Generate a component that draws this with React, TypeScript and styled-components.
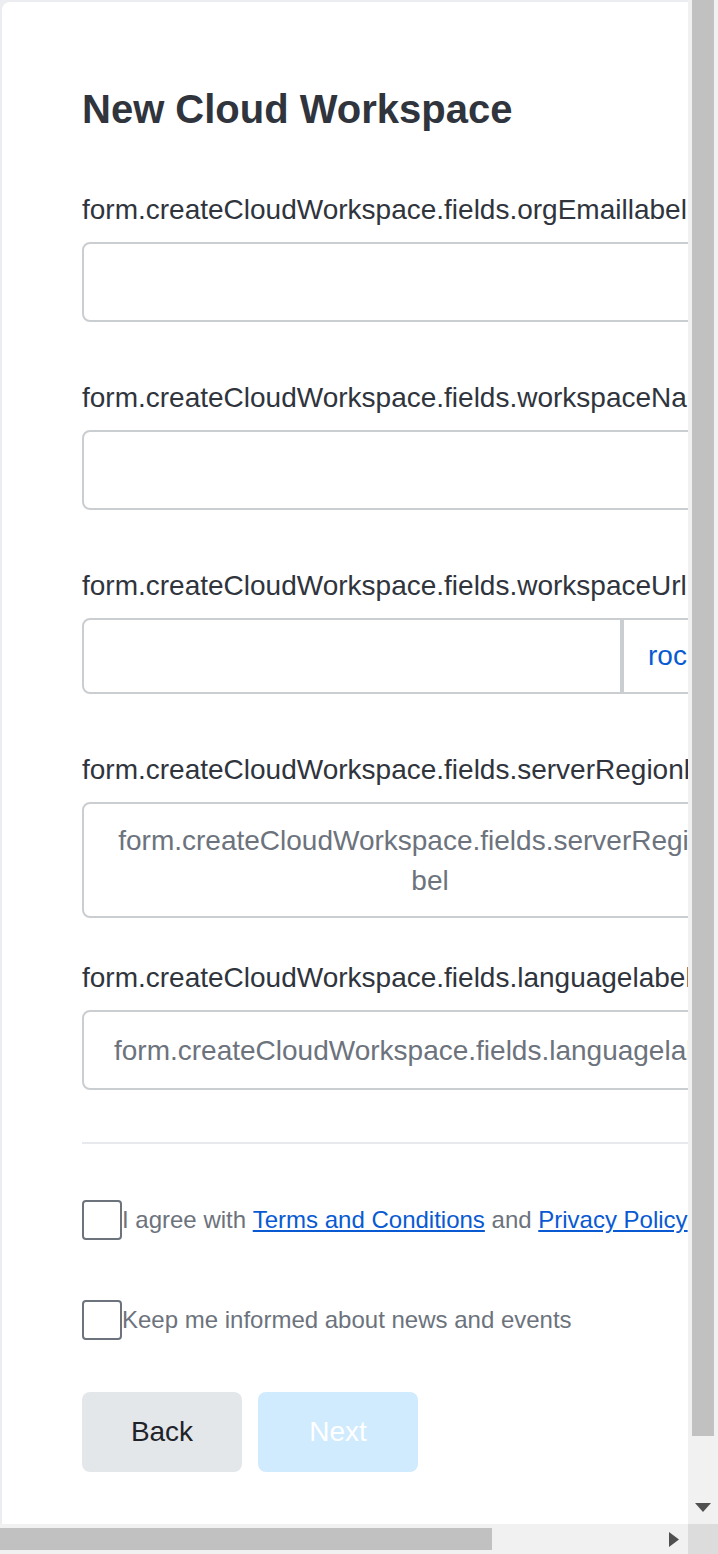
import React from "react";
import styled, { createGlobalStyle } from "styled-components";

const Global = createGlobalStyle`
  html, body { margin: 0; padding: 0; overflow: hidden; }
  body { font-family: "Liberation Sans", Arial, sans-serif; }
  * { box-sizing: border-box; }
`;

const Frame = styled.div`
  width: 718px;
  height: 1554px;
  display: grid;
  grid-template-columns: 688px 30px;
  grid-template-rows: 1524px 30px;
  overflow: hidden;
`;

const Viewport = styled.div`
  overflow: hidden;
  background: #ecedf1;
`;

const VScroll = styled.div`
  display: flex;
  flex-direction: column;
  background: #f1f1f1;
`;

const HScroll = styled.div`
  display: flex;
  background: #f1f1f1;
`;

const VThumb = styled.div`
  height: 1436px;
  margin: 0 4px;
  background: #c1c1c1;
`;

const HThumb = styled.div`
  width: 492px;
  margin: 4px 0;
  background: #c1c1c1;
`;

const Spacer = styled.div`
  flex: 1;
`;

const ArrowButton = styled.div`
  width: 30px;
  height: 30px;
  flex: none;
  display: flex;
`;

const Corner = styled.div`
  background: #dcdcdc;
`;

const Page = styled.div`
  width: 920px;
  padding: 2px;
`;

const Card = styled.main`
  width: 916px;
  background: #ffffff;
  border-radius: 8px;
  padding: 79px 80px 112px;
  display: flex;
  flex-direction: column;
`;

const Title = styled.h1`
  margin: 0 0 53px;
  font-size: 40px;
  line-height: 56px;
  font-weight: 700;
  color: #2f343d;
`;

const Field = styled.div<{ $mb: number }>`
  display: flex;
  flex-direction: column;
  margin-bottom: ${(p) => p.$mb}px;
`;

const Label = styled.label`
  font-size: 28px;
  line-height: 40px;
  color: #2f343d;
  margin-bottom: 12px;
  white-space: nowrap;
`;

const TextInput = styled.input`
  width: 100%;
  height: 80px;
  border: 2px solid #cbced1;
  border-radius: 8px;
  padding: 0 30px;
  font-family: inherit;
  font-size: 28px;
  color: #2f343d;
  background: #fff;
  outline: none;
`;

const UrlGroup = styled.div`
  display: flex;
  height: 76px;
`;

const UrlInput = styled.input`
  flex: 1;
  min-width: 0;
  height: 76px;
  border: 2px solid #cbced1;
  border-radius: 8px 0 0 8px;
  padding: 0 30px;
  font-family: inherit;
  font-size: 28px;
  background: #fff;
  outline: none;
`;

const Addon = styled.div`
  width: 216px;
  height: 76px;
  border: 2px solid #cbced1;
  border-radius: 0 8px 8px 0;
  padding-left: 24px;
  display: flex;
  align-items: center;
  font-size: 28px;
  color: #095ad2;
  white-space: nowrap;
  overflow: hidden;
`;

const Select = styled.div<{ $pt: number; $pb: number }>`
  display: flex;
  align-items: center;
  border: 2px solid #cbced1;
  border-radius: 8px;
  padding: ${(p) => p.$pt}px 0 ${(p) => p.$pb}px 30px;
  background: #fff;
`;

const SelectText = styled.span<{ $center?: boolean }>`
  flex: 1;
  min-width: 0;
  font-size: 28px;
  line-height: 40px;
  color: #6c737d;
  text-align: ${(p) => (p.$center ? "center" : "left")};
  word-break: ${(p) => (p.$center ? "break-all" : "normal")};
  white-space: ${(p) => (p.$center ? "normal" : "nowrap")};
  overflow: hidden;
`;

const Chevron = styled.span`
  width: 90px;
  display: flex;
  justify-content: center;
  color: #2f343d;
`;

const Divider = styled.hr`
  border: none;
  height: 2px;
  background: #e7e9ec;
  margin: 52px 0 56px;
`;

const CheckRow = styled.label<{ $mb: number }>`
  display: flex;
  align-items: center;
  height: 40px;
  margin-bottom: ${(p) => p.$mb}px;
  font-size: 24px;
  color: #6c737d;
  white-space: nowrap;
`;

const Box = styled.input`
  appearance: none;
  -webkit-appearance: none;
  margin: 0;
  width: 40px;
  height: 40px;
  flex: none;
  border: 2px solid #6c737d;
  border-radius: 4px;
  background: #fff;
`;

const Link = styled.a`
  color: #095ad2;
  text-decoration: underline;
`;

const Buttons = styled.div`
  display: flex;
  gap: 16px;
  margin-top: 52px;
`;

const Button = styled.button<{ $primary?: boolean }>`
  width: 160px;
  height: 80px;
  border: none;
  border-radius: 8px;
  font-family: inherit;
  font-size: 28px;
  background: ${(p) => (p.$primary ? "#d1ebfe" : "#e4e7ea")};
  color: ${(p) => (p.$primary ? "#ffffff" : "#1f2329")};
`;

const ChevronIcon = () => (
  <svg width="30" height="30" viewBox="0 0 24 24" fill="none" stroke="currentColor" strokeWidth="2" strokeLinecap="round" strokeLinejoin="round">
    <path d="M6 9l6 6 6-6" />
  </svg>
);

const DownArrow = () => (
  <svg width="30" height="30" viewBox="0 0 30 30">
    <polygon points="7,9 23,9 15,18" fill="#505050" />
  </svg>
);

const RightArrow = () => (
  <svg width="30" height="30" viewBox="0 0 30 30">
    <polygon points="11,8 21,15.5 11,23" fill="#505050" />
  </svg>
);

export default function App() {
  return (
    <>
      <Global />
      <Frame>
        <Viewport>
          <Page>
            <Card>
              <Title>New Cloud Workspace</Title>

              <Field $mb={56}>
                <Label>form.createCloudWorkspace.fields.orgEmaillabel</Label>
                <TextInput type="email" />
              </Field>

              <Field $mb={56}>
                <Label>form.createCloudWorkspace.fields.workspaceNamelabel</Label>
                <TextInput type="text" />
              </Field>

              <Field $mb={56}>
                <Label>form.createCloudWorkspace.fields.workspaceUrllabel</Label>
                <UrlGroup>
                  <UrlInput type="text" />
                  <Addon>rocket.chat</Addon>
                </UrlGroup>
              </Field>

              <Field $mb={40}>
                <Label>form.createCloudWorkspace.fields.serverRegionlabel</Label>
                <Select $pt={17} $pb={15}>
                  <SelectText $center>form.createCloudWorkspace.fields.serverRegionlabel</SelectText>
                  <Chevron>
                    <ChevronIcon />
                  </Chevron>
                </Select>
              </Field>

              <Field $mb={0}>
                <Label>form.createCloudWorkspace.fields.languagelabel</Label>
                <Select $pt={19} $pb={17}>
                  <SelectText>form.createCloudWorkspace.fields.languagelabel</SelectText>
                  <Chevron>
                    <ChevronIcon />
                  </Chevron>
                </Select>
              </Field>

              <Divider />

              <CheckRow $mb={60}>
                <Box type="checkbox" />
                I agree with&nbsp;<Link href="#">Terms and Conditions</Link>&nbsp;and&nbsp;
                <Link href="#">Privacy Policy</Link>
              </CheckRow>

              <CheckRow $mb={0}>
                <Box type="checkbox" />
                Keep me informed about news and events
              </CheckRow>

              <Buttons>
                <Button>Back</Button>
                <Button $primary disabled>
                  Next
                </Button>
              </Buttons>
            </Card>
          </Page>
        </Viewport>
        <VScroll>
          <VThumb />
          <Spacer />
          <ArrowButton>
            <DownArrow />
          </ArrowButton>
        </VScroll>
        <HScroll>
          <HThumb />
          <Spacer />
          <ArrowButton>
            <RightArrow />
          </ArrowButton>
        </HScroll>
        <Corner />
      </Frame>
    </>
  );
}
